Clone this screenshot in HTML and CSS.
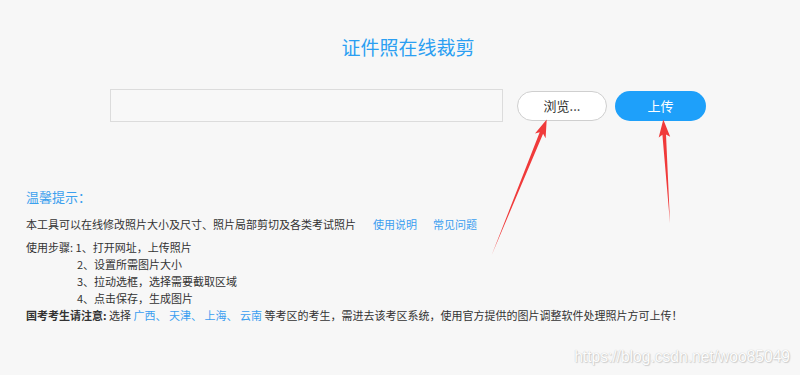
FILE: index.html
```html
<!DOCTYPE html>
<html lang="zh-CN">
<head>
<meta charset="utf-8">
<title>证件照在线裁剪</title>
<link rel="stylesheet" href="styles.css">
</head>
<body>
<div class="page">
  <h1 class="title">证件照在线裁剪</h1>
  <div class="upload-row">
    <div class="file-input"></div>
    <button class="btn btn-browse">浏览...</button>
    <button class="btn btn-upload">上传</button>
  </div>
  <div class="tips">
    <div class="tips-title">温馨提示：</div>
    <p class="intro">本工具可以在线修改照片大小及尺寸、照片局部剪切及各类考试照片<a class="link first">使用说明</a><a class="link">常见问题</a></p>
    <div class="steps">
      <div>使用步骤: 1、打开网址，上传照片</div>
      <div class="indent">2、设置所需图片大小</div>
      <div class="indent">3、拉动选框，选择需要截取区域</div>
      <div class="indent">4、点击保存，生成图片</div>
      <div><b>国考考生请注意:</b> 选择 <a class="link-inline">广西、</a> <a class="link-inline">天津、</a> <a class="link-inline">上海、</a> <a class="link-inline">云南</a> 等考区的考生，需进去该考区系统，使用官方提供的图片调整软件处理照片方可上传！</div>
    </div>
  </div>
  <svg class="arrows" width="800" height="375" viewBox="0 0 800 375">
    <polygon fill="#f03a3a" points="491.7,255 543.1,133.7 545.6,138.2 546.7,119.5 535.0,133.5 539.7,132.3"/>
    <polygon fill="#f03a3a" points="670,223 666.0,134.5 670.2,136.8 663.3,119.5 658.7,137.6 662.4,134.7"/>
  </svg>
  <div class="watermark">https://blog.csdn.net/woo85049</div>
</div>
</body>
</html>
```
FILE: styles.css
```css
html, body {
  margin: 0;
  padding: 0;
  background: #f7f7f7;
}
body {
  font-family: "Noto Sans CJK SC", "Liberation Sans", sans-serif;
  color: #333;
}
.page {
  position: relative;
  width: 800px;
  height: 375px;
  overflow: hidden;
}
.title {
  margin: 0;
  padding-top: 34px;
  padding-left: 16px;
  font-size: 19px;
  line-height: 26px;
  font-weight: normal;
  text-align: center;
  color: #2b9ff2;
}
.upload-row {
  display: flex;
  align-items: center;
  margin-top: 29px;
  padding-left: 110px;
}
.file-input {
  width: 391px;
  height: 31px;
  border: 1px solid #dcdcdc;
  background: #f8f8f8;
}
.btn {
  height: 30px;
  border-radius: 15px;
  font-family: "Noto Sans CJK SC", "Liberation Sans", sans-serif;
  font-size: 13px;
  padding: 0;
  cursor: pointer;
}
.btn-browse {
  width: 90px;
  margin-left: 14px;
  background: #fff;
  border: 1px solid #cfcfcf;
  color: #333;
}
.btn-upload {
  width: 91px;
  margin-left: 8px;
  background: #1ea0fa;
  border: none;
  color: #fff;
}
.tips {
  padding-left: 26px;
  margin-top: 65px;
  font-size: 11px;
}
.tips-title {
  font-size: 13px;
  line-height: 20px;
  color: #3ba0ee;
}
.intro {
  margin: 8px 0 0;
  line-height: 18px;
}
.link {
  color: #3a9ef0;
  margin-left: 16px;
}
.link.first {
  margin-left: 17px;
}
.link-inline {
  color: #3a9ef0;
}
.steps {
  margin-top: 6px;
  line-height: 17px;
}
.indent {
  padding-left: 51px;
}
.steps b {
  font-weight: bold;
}
.arrows {
  position: absolute;
  left: 0;
  top: 0;
  pointer-events: none;
}
.watermark {
  position: absolute;
  right: 10px;
  top: 348px;
  font-family: "Liberation Sans", sans-serif;
  font-size: 15.6px;
  line-height: 18px;
  color: #fdfdfd;
  text-shadow: 0 0 1px #b8b8b8, 1px 1px 1px #d0d0d0;
}
```
